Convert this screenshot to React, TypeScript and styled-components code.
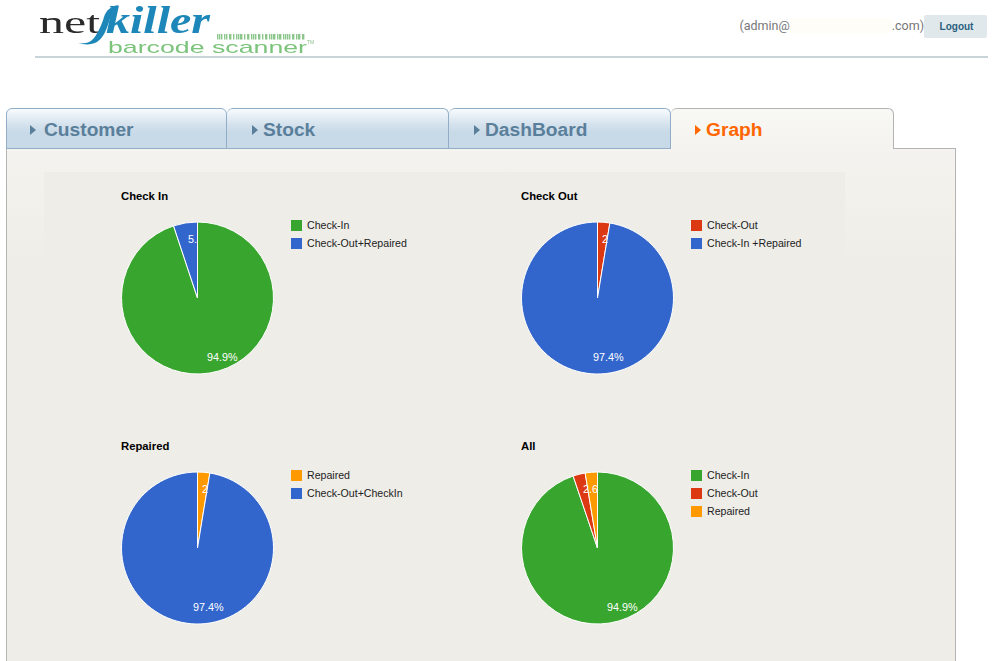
import React from "react";
import styled, { createGlobalStyle } from "styled-components";

const Global = createGlobalStyle`
  html, body { margin: 0; padding: 0; background: #fff; overflow: hidden; }
  body { font-family: "Liberation Sans", Arial, sans-serif; }
`;

const Page = styled.div`
  width: 993px;
  height: 661px;
  overflow: hidden;
`;

const Header = styled.header`
  display: flex;
  align-items: flex-start;
  justify-content: space-between;
  width: 953px;
  height: 56px;
  margin-left: 35px;
  border-bottom: 2px solid #c9d4d8;
`;

const LogoSvg = styled.svg`
  display: block;
  flex: none;
`;

const UserBox = styled.div`
  display: flex;
  align-items: flex-start;
  margin-top: 15px;
  margin-right: 1px;
`;

const UserText = styled.span`
  display: flex;
  align-items: center;
  height: 23px;
  margin-top: -1px;
  font-family: Roboto, "Liberation Sans", sans-serif;
  font-size: 12.5px;
  color: #77777a;
`;

const Masked = styled.span`
  display: block;
  width: 102px;
  height: 15px;
  background: #fffdf8;
`;

const LogoutButton = styled.button`
  width: 63px;
  height: 23px;
  padding: 0 0 0 2px;
  border: 0;
  border-radius: 2px;
  background: #e0e8ec;
  color: #2a5f80;
  font-family: "Liberation Sans", Arial, sans-serif;
  font-size: 10px;
  font-weight: bold;
`;

const TabBar = styled.nav`
  display: flex;
  width: 888px;
  height: 41px;
  margin: 50px 0 0 6px;
  position: relative;
  z-index: 1;
`;

const Tab = styled.div<{ $active?: boolean; $first?: boolean; $gap: number }>`
  display: flex;
  align-items: center;
  gap: ${(p) => p.$gap}px;
  box-sizing: border-box;
  width: ${(p) => (p.$first ? 221 : p.$active ? 223 : 222)}px;
  height: 41px;
  padding-left: ${(p) => (p.$first ? 23 : p.$active ? 24 : 25)}px;
  padding-top: 2px;
  font-size: 19.2px;
  font-weight: bold;
  border-radius: 6px 6px 0 0;
  color: ${(p) => (p.$active ? "#ff6600" : "#5a7f9b")};
  border: 1px solid ${(p) => (p.$active ? "#b4b4b4" : "#92aec6")};
  border-left-width: 0;
  border-bottom: ${(p) => (p.$active ? "0" : "1px solid #92aec6")};
  ${(p) => (p.$first ? "border-left: 1px solid #92aec6;" : "")}
  background: ${(p) =>
    p.$active
      ? "linear-gradient(#f8f8f5, #f4f3ef)"
      : "linear-gradient(#f8fbfe 0%, #d6e3ee 38%, #c8d9e7 60%, #c8d9e7 100%)"};
`;

const Arrow = styled.i`
  display: block;
  width: 0;
  height: 0;
  border-style: solid;
  border-width: 5px 0 5px 6px;
  border-color: transparent transparent transparent currentColor;
`;

const Panel = styled.main`
  box-sizing: border-box;
  width: 950px;
  height: 520px;
  margin: -1px 0 0 6px;
  padding: 23px 0 0 37px;
  border: 1px solid #b4b4b4;
  border-bottom: 0;
  background: linear-gradient(#f4f3ef, #f2f1ec 40px, #eeede8 120px);
`;

const Inner = styled.section`
  display: grid;
  grid-template-columns: 400px 400px;
  grid-auto-rows: 250px;
  width: 801px;
  background: #eeede8;
`;

const ChartSvg = styled.svg`
  display: block;
  font-family: "Liberation Sans", Arial, sans-serif;
`;

type Slice = { value: number; color: string; legend: string };
type Label = { text: string; x: number; y: number };
type ChartData = { title: string; slices: Slice[]; labels: Label[] };

const GREEN = "#38a52e";
const BLUE = "#3366cc";
const RED = "#dc3912";
const ORANGE = "#ff9900";

const charts: ChartData[] = [
  {
    title: "Check In",
    slices: [
      { value: 94.9, color: GREEN, legend: "Check-In" },
      { value: 5.1, color: BLUE, legend: "Check-Out+Repaired" },
    ],
    labels: [
      { text: "94.9%", x: 163, y: 189 },
      { text: "5.", x: 144, y: 71 },
    ],
  },
  {
    title: "Check Out",
    slices: [
      { value: 2.6, color: RED, legend: "Check-Out" },
      { value: 97.4, color: BLUE, legend: "Check-In +Repaired" },
    ],
    labels: [
      { text: "2", x: 158, y: 71 },
      { text: "97.4%", x: 149, y: 189 },
    ],
  },
  {
    title: "Repaired",
    slices: [
      { value: 2.6, color: ORANGE, legend: "Repaired" },
      { value: 97.4, color: BLUE, legend: "Check-Out+CheckIn" },
    ],
    labels: [
      { text: "2", x: 158, y: 71 },
      { text: "97.4%", x: 149, y: 189 },
    ],
  },
  {
    title: "All",
    slices: [
      { value: 94.9, color: GREEN, legend: "Check-In" },
      { value: 2.6, color: RED, legend: "Check-Out" },
      { value: 2.6, color: ORANGE, legend: "Repaired" },
    ],
    labels: [
      { text: "94.9%", x: 163, y: 189 },
      { text: "2.6", x: 139, y: 71 },
    ],
  },
];

const CX = 153.5;
const CY = 126;
const R = 76;

function slicePath(from: number, to: number, total: number) {
  const a0 = (from / total) * 2 * Math.PI;
  const a1 = (to / total) * 2 * Math.PI;
  const x0 = CX + R * Math.sin(a0);
  const y0 = CY - R * Math.cos(a0);
  const x1 = CX + R * Math.sin(a1);
  const y1 = CY - R * Math.cos(a1);
  const large = a1 - a0 > Math.PI ? 1 : 0;
  return `M${CX} ${CY}L${x0} ${y0}A${R} ${R} 0 ${large} 1 ${x1} ${y1}Z`;
}

function PieChart({ data }: { data: ChartData }) {
  const total = data.slices.reduce((s, x) => s + x.value, 0);
  let acc = 0;
  return (
    <ChartSvg width={400} height={250} viewBox="0 0 400 250">
      <text x={77} y={28} fontSize={11.3} fontWeight="bold" fill="#000">
        {data.title}
      </text>
      {data.slices.map((s) => {
        const from = acc;
        acc += s.value;
        return (
          <path
            key={s.legend}
            d={slicePath(from, acc, total)}
            fill={s.color}
            stroke="#fff"
            strokeWidth={1}
          />
        );
      })}
      {data.labels.map((l) => (
        <text key={l.text} x={l.x} y={l.y} fontSize={10.8} fill="#fff">
          {l.text}
        </text>
      ))}
      {data.slices.map((s, i) => (
        <g key={s.legend}>
          <rect x={247} y={48 + i * 18} width={11} height={11} fill={s.color} />
          <text x={263} y={57 + i * 18} fontSize={10.6} fill="#222">
            {s.legend}
          </text>
        </g>
      ))}
    </ChartSvg>
  );
}

function Logo() {
  const bars = [
    0, 2, 4, 7, 9, 12, 13, 16, 19, 21, 23, 24, 27, 30, 31, 34, 36, 38, 41, 42, 45, 48, 49, 52, 54, 56, 57, 60, 62, 63,
    66, 68, 70, 72, 75, 76, 79, 81, 82, 85, 86,
  ];
  return (
    <LogoSvg width={300} height={56} viewBox="35 0 300 56">
      <defs>
        <filter id="soft" x="-5%" y="-5%" width="110%" height="110%">
          <feGaussianBlur stdDeviation="0.4" />
        </filter>
      </defs>
      <g filter="url(#soft)">
        <text
          x={39}
          y={33}
          fontFamily='"Liberation Serif", serif'
          fontSize={32}
          fill="#2b2b2b"
          textLength={61}
          lengthAdjust="spacingAndGlyphs"
        >
          net
        </text>
        <path
          d="M119 5C115 7 112 13 109 22C106 31 103 38 97 42C92 45 84 45 78 43C84 44 90 43 94 38C98 33 102 24 104 17C106 11 110 6 119 5Z"
          fill="#1c87b8"
        />
        <text
          x={106}
          y={33}
          fontFamily='"Liberation Serif", serif'
          fontStyle="italic"
          fontWeight="bold"
          fontSize={38}
          fill="#1c87b8"
          textLength={104}
          lengthAdjust="spacingAndGlyphs"
        >
          killer
        </text>
        <text
          x={108}
          y={53}
          fontFamily='"Liberation Sans", sans-serif'
          fontSize={17}
          fill="#7cc47c"
          textLength={199}
          lengthAdjust="spacingAndGlyphs"
        >
          barcode scanner
        </text>
        <text x={307} y={44} fontFamily='"Liberation Sans", sans-serif' fontSize={5} fill="#8fbf8f">
          TM
        </text>
        {bars.map((b) => (
          <rect key={b} x={217 + b} y={34} width={1.4} height={5.5} fill="#8cc68c" />
        ))}
      </g>
    </LogoSvg>
  );
}

const tabs = [
  { name: "Customer", gap: 8, first: true },
  { name: "Stock", gap: 5 },
  { name: "DashBoard", gap: 5 },
  { name: "Graph", gap: 5, active: true },
];

export default function App() {
  return (
    <Page>
      <Global />
      <Header>
        <Logo />
        <UserBox>
          <UserText>
            (admin@
            <Masked />
            .com)
          </UserText>
          <LogoutButton>Logout</LogoutButton>
        </UserBox>
      </Header>
      <TabBar>
        {tabs.map((t) => (
          <Tab key={t.name} $active={t.active} $first={t.first} $gap={t.gap}>
            <Arrow />
            {t.name}
          </Tab>
        ))}
      </TabBar>
      <Panel>
        <Inner>
          {charts.map((c) => (
            <PieChart key={c.title} data={c} />
          ))}
        </Inner>
      </Panel>
    </Page>
  );
}
